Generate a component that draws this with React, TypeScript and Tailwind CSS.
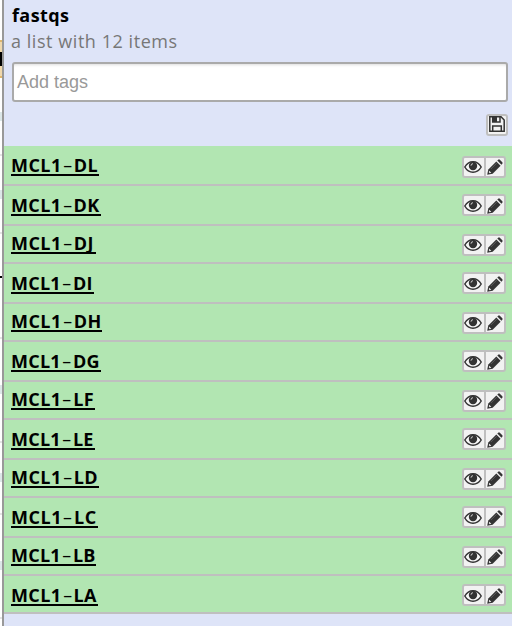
const rows = [
  { prefix: 'MCL1', suffix: 'DL', box: 'h-[40px] pt-[8px]', width: 'w-[88px] tracking-[0.450px]', tools: 'mt-[2px]', icons: 'pb-[1px]' },
  { prefix: 'MCL1', suffix: 'DK', box: 'h-[40px] pt-[8px]', width: 'w-[90px] tracking-[0.400px]', tools: 'mt-0', icons: 'pt-[2px]' },
  { prefix: 'MCL1', suffix: 'DJ', box: 'h-[38px] pt-[6px]', width: 'w-[85px] tracking-[0.450px]', tools: 'mt-[2px]', icons: 'pb-[1px]' },
  { prefix: 'MCL1', suffix: 'DI', box: 'h-[40px] pt-[8px]', width: 'w-[83px] tracking-[0.250px]', tools: 'mt-0', icons: 'pt-[2px]' },
  { prefix: 'MCL1', suffix: 'DH', box: 'h-[38px] pt-[6px]', width: 'w-[91px] tracking-[0.450px]', tools: 'mt-[2px]', icons: 'pb-[1px]' },
  { prefix: 'MCL1', suffix: 'DG', box: 'h-[40px] pt-[8px]', width: 'w-[90px] tracking-[0.250px]', tools: 'mt-0', icons: 'pt-[2px]' },
  { prefix: 'MCL1', suffix: 'LF', box: 'h-[38px] pt-[6px]', width: 'w-[84px] tracking-[0.350px]', tools: 'mt-[2px]', icons: 'pb-[1px]' },
  { prefix: 'MCL1', suffix: 'LE', box: 'h-[40px] pt-[8px]', width: 'w-[84px] tracking-[0.250px]', tools: 'mt-0', icons: 'pt-[2px]' },
  { prefix: 'MCL1', suffix: 'LD', box: 'h-[38px] pt-[6px]', width: 'w-[88px] tracking-[0.450px]', tools: 'mt-[2px]', icons: 'pb-[1px]' },
  { prefix: 'MCL1', suffix: 'LC', box: 'h-[40px] pt-[8px]', width: 'w-[87px] tracking-[0.550px]', tools: 'mt-0', icons: 'pt-[2px]' },
  { prefix: 'MCL1', suffix: 'LB', box: 'h-[38px] pt-[6px]', width: 'w-[85px] tracking-[0.250px]', tools: 'mt-[2px]', icons: 'pb-[1px]' },
  { prefix: 'MCL1', suffix: 'LA', box: 'h-[38px] pt-[8px]', width: 'w-[87px] tracking-[0.400px]', tools: 'mt-0', icons: 'pt-[2px]' },
];

function Eye() {
  return (
    <svg className="shrink-0" width="18" height="12" viewBox="0 0 18 12" fill="none">
      <path d="M.8 6C2.800 2.500 5.700.8 9 .8S15.200 2.500 17.200 6C15.200 9.500 12.300 11.200 9 11.200S2.800 9.500.8 6Z" fill="#f6f6f6" stroke="#333" strokeWidth="1.500" />
      <circle cx="9" cy="5" r="4.200" fill="#333" />
      <path d="M7 4.700A2 2 0 0 1 9 2.700" stroke="#ddd" strokeWidth=".9" />
    </svg>
  );
}

function Pencil() {
  return (
    <svg className="shrink-0" width="16" height="16" viewBox="0 0 16 16" fill="none">
      <path d="M.2 15.800 1.300 10.400 9.300 2.400 13.600 6.700 5.600 14.700Z" fill="#333" />
      <path d="M10.300 1.600 11.200.7Q12 0 12.800.7L15.300 3.200Q16 4 15.300 4.800L14.400 5.700Z" fill="#333" />
      <path d="M2.200 11.700 4.300 13.800 2.700 14.200 1.800 13.300Z" fill="#eee" />
      <path d="m3.900 10 5.800-5.800" stroke="#777" strokeWidth=".6" />
    </svg>
  );
}

function Floppy() {
  return (
    <svg className="shrink-0" width="16" height="16" viewBox="0 0 16 16" fill="none" stroke="#333" strokeWidth="1.500">
      <path d="M.8.800H12L15.200 4V15.200H.8Z" />
      <path d="M3.700 15V10H12.300V15M3.700 1V6H11V1" />
      <path d="M3.700 1H8V6H3.700Z" fill="#333" stroke="none" />
    </svg>
  );
}

export default function App() {
  return (
    <div className="flex h-[626px] w-[512px] overflow-hidden bg-[#dee4f8] font-['Open_Sans',sans-serif]">
      <div className="h-full w-[2px] shrink-0 bg-white">
        <div className="h-[40px]" />
        <div className="h-[12px] border-t-2 border-[#dfb66c] bg-[#f0d8ac]" />
        <div className="h-[14px] bg-black" />
        <div className="h-[12px] border-b-2 border-[#dfb66c] bg-[#f0d8ac]" />
        <div className="mt-[34px] h-[9px] bg-[#dce7e8]" />
        <div className="mt-[33px] h-[2px] bg-[#e4e4e4]" />
        <div className="mt-[34px] h-[9px] bg-[#dce7e8]" />
        <div className="mt-[33px] h-[2px] bg-[#e4e4e4]" />
        <div className="mt-[42px] h-[2px] bg-black" />
        <div className="mt-[59px] h-[2px] bg-[#e4e4e4]" />
        <div className="mt-[46px] h-[9px] bg-[#dce7e8]" />
        <div className="mt-[47px] h-[2px] bg-[#e4e4e4]" />
        <div className="mt-[30px] h-[9px] bg-[#dce7e8]" />
        <div className="mt-[31px] h-[2px] bg-[#e4e4e4]" />
        <div className="mt-[46px] h-[9px] bg-[#dce7e8]" />
        <div className="mt-[47px] h-[2px] bg-[#e4e4e4]" />
      </div>
      <div className="h-full w-[2px] shrink-0 bg-[#999]" />
      <main className="min-w-0 flex-1">
        <header className="h-[146px] pt-[3px] pr-[4px] pl-[8px]">
          <h1 className="h-[25px] text-[18px] leading-[25px] font-bold tracking-[0.4px] text-black">fastqs</h1>
          <p className="-ml-px h-[26px] text-[18px] leading-[26px] tracking-[0.550px] text-[#777]">a list with 12 items</p>
          <div className="mt-[8px] h-[40px] rounded-[3px] border-2 border-[#aaa] bg-white pl-[3px] font-['Liberation_Sans',sans-serif] text-[18px] leading-[36px] text-[#999] shadow-[inset_0_3px_3px_-2px_#ddd]">Add tags</div>
          <div className="mt-[12px] ml-auto flex h-[22px] w-[22px] items-center justify-center rounded-[3px] border-2 border-[#bfbfbf] bg-[#f2f2f2] pb-[2px]"><Floppy /></div>
        </header>
        {rows.map((row) => (
          <section key={row.suffix} className={`flex items-start justify-between border-b-2 border-[#bfbfbf] bg-[#b2e6b2] pr-[6px] pl-[7px] ${row.box}`}>
            <a className={`h-[22px] border-b-2 border-black text-[18px] leading-[22px] font-bold whitespace-nowrap text-black ${row.width}`}>
              {row.prefix}
              <span className="inline-block w-[12px] scale-x-[1.700] text-center font-medium">-</span>
              {row.suffix}
            </a>
            <div className={`flex h-[22px] w-[44px] rounded-[3px] border-2 border-[#bfbfbf] bg-[#f2f2f2] ${row.tools}`}>
              <span className={`flex w-[22px] items-center border-r-2 border-[#bfbfbf] ${row.icons}`}><Eye /></span>
              <span className={`flex w-[18px] items-center pl-[1px] ${row.icons}`}><Pencil /></span>
            </div>
          </section>
        ))}
      </main>
    </div>
  );
}
